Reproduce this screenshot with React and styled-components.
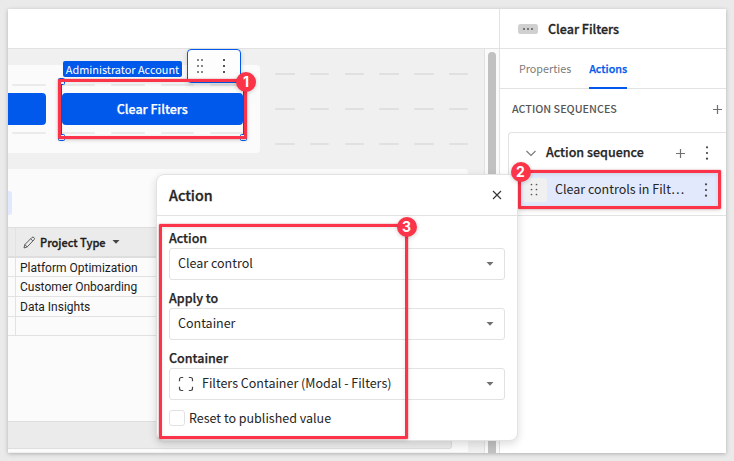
import React from "react";
import styled, { createGlobalStyle } from "styled-components";

const BLUE = "#0059eb";
const RED = "#fb3449";
const LINE = "#e2e2e2";

const GlobalStyle = createGlobalStyle`
  *, *::before, *::after { box-sizing: border-box; }
  html, body { margin: 0; height: 100%; background: #eaeaea; overflow: hidden; }
  body { font-family: "Noto Sans CJK JP", "Noto Sans", sans-serif; font-size: 12.5px; color: #252525; line-height: 18px; }
  button { font: inherit; color: inherit; border: 0; padding: 0; background: none; }
  svg { display: block; flex: none; }
`;

const Page = styled.main`
  position: relative;
  width: 734px;
  height: 461px;
  padding: 9px 8px 8px;
`;

const Shell = styled.div`
  display: grid;
  grid-template-columns: 491px 227px;
  height: 444px;
  background: #fff;
  overflow: hidden;
  box-shadow: 0 1px 4px rgba(0, 0, 0, 0.25);
`;

const Editor = styled.section`
  display: flex;
  flex-direction: column;
  min-width: 0;
  min-height: 0;
`;

const TopBar = styled.header`
  height: 40px;
  flex: none;
  border-bottom: 1px solid ${LINE};
  background: #fff;
`;

const Workspace = styled.div`
  display: flex;
  flex: 1;
  min-height: 0;
`;

const Canvas = styled.div`
  width: 476px;
  background: #f0f0f0;
  padding-top: 16px;
  overflow: hidden;
`;

const ScrollTrack = styled.div`
  width: 15px;
  padding: 3px 0 0 3px;
  background: #fafafa;
  border-left: 1px solid ${LINE};
`;

const ScrollThumb = styled.div`
  width: 8px;
  height: 420px;
  border-radius: 4px;
  background: #c1c1c1;
`;

const CanvasTop = styled.div`
  display: flex;
  height: 88px;
`;

const ControlCard = styled.div`
  width: 252px;
  height: 88px;
  padding-top: 19px;
  background: #fbfbfb;
  border-radius: 0 4px 4px 0;
`;

const DashRow = styled.div`
  display: flex;
  gap: ${(p) => p.$gap}px;
  padding-left: ${(p) => p.$indent}px;
  height: 2px;
`;

const Dash = styled.span`
  width: ${(p) => p.$width}px;
  height: 2px;
  flex: none;
  border-radius: 1px;
  background: ${(p) => p.$color};
`;

const ButtonRow = styled.div`
  display: flex;
  gap: 15.5px;
  padding: 7px 0 7px;
`;

const CutButton = styled.div`
  width: 38px;
  height: 32px;
  background: ${BLUE};
  border-radius: 0 4px 4px 0;
`;

const PrimaryButton = styled.button`
  width: 181.5px;
  height: 32px;
  border-radius: 4px;
  background: ${BLUE};
  color: #fff;
  font-weight: 500;
  font-size: 12.5px;
  line-height: 18px;
  -webkit-text-stroke: 0.25px currentColor;
`;

const GridHints = styled.div`
  display: flex;
  flex-direction: column;
  gap: 33px;
  padding-top: 8px;
`;

const TableCard = styled.div`
  width: 460px;
  height: 283px;
  margin-top: 16px;
  padding-top: 22px;
  background: #fbfbfb;
  border-top-right-radius: 4px;
`;

const Chip = styled.div`
  width: 4px;
  height: 24px;
  margin-bottom: 12px;
  border-radius: 0 3px 3px 0;
  background: #e3e9fc;
`;

const Table = styled.div`
  width: 444px;
`;

const TableRow = styled.div`
  display: grid;
  grid-template-columns: 7px 1fr;
  grid-template-rows: 100%;
  height: ${(p) => p.$height || 20}px;
  border-bottom: 1px solid ${LINE};
  font: 12px/21px Roboto, sans-serif;
  color: #1b1b1b;
`;

const HeadRow = styled(TableRow)`
  height: 31px;
  background: #ebebeb;
  border-top: 1px solid #dedede;
  border-bottom: 2px solid #dedede;
`;

const Cell = styled.div`
  padding-left: 4px;
  border-left: 1px solid ${(p) => (p.$first ? "transparent" : LINE)};
`;

const HeadCell = styled.div`
  display: flex;
  align-items: center;
  padding-left: 7px;
  border-left: 1px solid ${LINE};
  font: 500 11px/18px "Noto Sans CJK JP", sans-serif;
  -webkit-text-stroke: 0.3px currentColor;
`;

const HeadLabel = styled.span`
  width: 64px;
  margin: 0 8px 0 4px;
  white-space: nowrap;
`;

const TableFooter = styled.div`
  width: 444px;
  height: 28px;
  margin-top: 85px;
  background: #ebebeb;
  border: solid #dedede;
  border-width: 1px 1px 1px 0;
  border-bottom-right-radius: 3px;
`;

const Panel = styled.aside`
  border-left: 1px solid ${LINE};
  background: #fff;
`;

const PanelHeader = styled.header`
  display: flex;
  align-items: center;
  gap: 10px;
  height: 40px;
  padding-left: 18px;
  border-bottom: 1px solid ${LINE};
`;

const TypeBadge = styled.span`
  display: flex;
  align-items: center;
  justify-content: center;
  width: 20px;
  height: 10px;
  border-radius: 2.5px;
  background: #d0d0d0;
`;

const PanelTitle = styled.h1`
  margin: 0;
  font-size: 12.5px;
  font-weight: 500;
  line-height: 20px;
  -webkit-text-stroke: 0.3px currentColor;
`;

const Tabs = styled.nav`
  display: flex;
  gap: 18px;
  height: 40px;
  padding-left: 19px;
  border-bottom: 1px solid ${LINE};
`;

const Tab = styled.button`
  display: flex;
  align-items: center;
  height: 40px;
  padding-top: 2px;
  font-size: 10.75px;
  font-weight: ${(p) => (p.$active ? 500 : 400)};
  color: ${(p) => (p.$active ? BLUE : "#7a7a7a")};
  border-bottom: 2px solid ${(p) => (p.$active ? BLUE : "transparent")};
  -webkit-text-stroke: ${(p) => (p.$active ? "0.25px currentColor" : "0")};
`;

const SectionHead = styled.div`
  display: flex;
  align-items: center;
  justify-content: space-between;
  height: 41px;
  padding: 0 4px 0 12px;
  margin-bottom: 2px;
  color: #555;
  font-size: 10.75px;
  font-weight: 500;
`;

const SectionTitle = styled.span`
  padding-bottom: 2px;
`;

const SequenceCard = styled.div`
  height: 84px;
  margin-left: 8px;
  border: solid ${LINE};
  border-width: 1px 0 1px 1px;
  border-radius: 4px 0 0 0;
`;

const SequenceHead = styled.div`
  display: grid;
  grid-template-columns: 11px 1fr 9px 24px;
  align-items: center;
  height: 40px;
  padding: 0 17px 0 17px;
`;

const SequenceName = styled.span`
  padding: 0 0 2px 9px;
  font-weight: 500;
  -webkit-text-stroke: 0.25px currentColor;
`;

const MenuSlot = styled.span`
  justify-self: end;
`;

const StepRow = styled.div`
  display: grid;
  grid-template-columns: 24px 1fr 4px;
  align-items: center;
  height: 33px;
  margin: 0 8px 0 12px;
  padding: 0 10px 0 2px;
  background: #e3e9fc;
`;

const StepHandle = styled.span`
  display: flex;
  align-items: center;
  justify-content: center;
  height: 24px;
  padding-right: 2px;
  border-radius: 3px;
  background: #f0f0f1;
`;

const StepName = styled.span`
  padding: 0 0 2px 8px;
  white-space: nowrap;
`;

const SelectionLabel = styled.div`
  position: absolute;
  left: 63px;
  top: 61px;
  width: 119px;
  height: 16px;
  border-radius: 2px;
  background: ${BLUE};
  color: #fff;
  font-size: 10.9px;
  line-height: 16px;
  text-align: center;
  white-space: nowrap;
`;

const SelectionToolbar = styled.div`
  position: absolute;
  left: 187px;
  top: 49px;
  width: 54px;
  height: 34px;
  display: flex;
  align-items: center;
  padding-left: 9px;
  gap: 20px;
  background: #fdfdfd;
  border: 1px solid ${BLUE};
  border-radius: 4px;
  box-shadow: 0 2px 5px rgba(0, 0, 0, 0.16);
`;

const SelectionFrame = styled.div`
  position: absolute;
  left: 61px;
  top: 80px;
  width: 183px;
  height: 58px;
  border: 1px solid ${BLUE};
`;

const Handle = styled.i`
  position: absolute;
  width: 7px;
  height: 7px;
  border: 1px solid ${BLUE};
  border-radius: 1.5px;
  background: #fff;
  ${(p) => (p.$v === "top" ? "top: -3px" : "bottom: -4px")};
  ${(p) => (p.$h === "left" ? "left: -4px" : "right: -4px")};
`;

const Dialog = styled.section`
  position: absolute;
  left: 156px;
  top: 174px;
  width: 362px;
  height: 267px;
  background: #fff;
  border: 1px solid ${LINE};
  border-radius: 8px;
  box-shadow: 0 3px 9px rgba(0, 0, 0, 0.14);
`;

const DialogHeader = styled.header`
  display: flex;
  align-items: center;
  justify-content: space-between;
  height: 41px;
  padding: 0 15px 0 12px;
  border-bottom: 1px solid ${LINE};
`;

const DialogTitle = styled.h2`
  margin: 0;
  font-size: 14.3px;
  font-weight: 500;
  -webkit-text-stroke: 0.3px currentColor;
`;

const DialogBody = styled.div`
  padding: 14px 12px 0;
`;

const Field = styled.div`
  margin-bottom: 10px;
`;

const FieldLabel = styled.div`
  height: 18px;
  line-height: 16px;
  font-weight: 500;
  -webkit-text-stroke: 0.25px currentColor;
`;

const Select = styled.div`
  display: flex;
  align-items: center;
  gap: 8px;
  height: 32px;
  padding: 0 10px 0 8px;
  border: 1px solid ${LINE};
  border-radius: 3px;
`;

const SelectValue = styled.span`
  flex: 1;
  padding-bottom: 2px;
`;

const CheckRow = styled.label`
  display: flex;
  align-items: center;
  gap: 4px;
  height: 16px;
`;

const CheckBox = styled.span`
  width: 16px;
  height: 16px;
  border: 1px solid ${LINE};
  border-radius: 3px;
`;

const Callout = styled.div`
  position: absolute;
  left: ${(p) => p.$x}px;
  top: ${(p) => p.$y}px;
  width: ${(p) => p.$w}px;
  height: ${(p) => p.$h}px;
  border: 3px solid ${RED};
  border-radius: 1px;
  box-shadow: 0 0 0 0.5px rgba(251, 52, 73, 0.25), 0 1px 4px rgba(0, 0, 0, 0.18), inset 0 1px 4px rgba(0, 0, 0, 0.1);
`;

const CalloutNumber = styled.span`
  position: absolute;
  left: ${(p) => p.$x}px;
  top: ${(p) => p.$y}px;
  width: 20px;
  height: 20px;
  border-radius: 50%;
  background: ${RED};
  box-shadow: 0 1px 4px rgba(0, 0, 0, 0.2);
  color: #fff;
  font: 700 14px/19px Inter, sans-serif;
  text-align: center;
`;

const Dots = ({ cols = 1, gapX = 4, gapY = 6, size = 2, color = "#555" }) => {
  const w = (cols - 1) * gapX + size;
  const h = 2 * gapY + size;
  return (
    <svg width={w} height={h} fill={color} shapeRendering="crispEdges">
      {[0, 1, 2].map((r) =>
        Array.from({ length: cols }, (_, c) => (
          <rect key={`${r}-${c}`} x={c * gapX} y={r * gapY} width={size} height={size} />
        ))
      )}
    </svg>
  );
};

const HandleDots = () => (
  <svg width="8" height="13" viewBox="0 0 8 13" fill="#555">
    {[1.5, 6.5, 11.5].flatMap((y) =>
      [1.5, 6.5].map((x) => <circle key={`${x}-${y}`} cx={x} cy={y} r="0.85" />)
    )}
  </svg>
);

const Kebab = () => (
  <svg width="4" height="16" viewBox="0 0 4 16" fill="#444">
    <circle cx="2" cy="2.3" r="1.1" />
    <circle cx="2" cy="8" r="1.1" />
    <circle cx="2" cy="13.7" r="1.1" />
  </svg>
);

const Plus = () => (
  <svg width="9" height="9" viewBox="0 0 9 9" stroke="#707070" strokeWidth="1.2">
    <path d="M4.5 0v9M0 4.5h9" />
  </svg>
);

const Caret = ({ color = "#707070" }) => (
  <svg width="8" height="4" viewBox="0 0 8 4" fill={color}>
    <path d="M.5 0h7L4 3.8z" />
  </svg>
);

const Chevron = () => (
  <svg width="10" height="8" viewBox="0 0 10 8" fill="none" stroke="#777" strokeWidth="1.1">
    <path d="M.5 2L5 6.5 9.5 2" />
  </svg>
);

const Close = () => (
  <svg width="10" height="10" viewBox="0 0 10 10" stroke="#333" strokeWidth="1.1">
    <path d="M1 1l8 8M9 1L1 9" />
  </svg>
);

const Pencil = () => (
  <svg width="13" height="13" viewBox="0 0 13 13" fill="none" stroke="#555" strokeWidth="0.95" strokeLinejoin="round">
    <path d="M1 12l.8-3.4L8.9 1.5q1.1-.9 2.1.1t.1 2.1L4.2 10.9zM7.7 2.8l2.2 2.2M1.8 8.6l2.4 2.3" />
  </svg>
);

const ContainerIcon = () => (
  <svg width="16" height="16" viewBox="0 0 16 16" fill="none" stroke="#444" strokeWidth="1.2">
    <path d="M5.2 1.5H3.4Q1.5 1.5 1.5 3.4V5.2M10.8 1.5h1.8q1.9 0 1.9 1.9V5.2M5.2 14.5H3.4q-1.9 0-1.9-1.9V10.8M10.8 14.5h1.8q1.9 0 1.9-1.9V10.8" />
  </svg>
);

const Ellipsis = () => (
  <svg width="10" height="2" fill="#777" shapeRendering="crispEdges">
    <rect width="2" height="2" />
    <rect x="4" width="2" height="2" />
    <rect x="8" width="2" height="2" />
  </svg>
);

const Dashes = ({ count, width, gap, indent, color }) => (
  <DashRow $gap={gap} $indent={indent}>
    {Array.from({ length: count }, (_, i) => (
      <Dash key={i} $width={width} $color={color} />
    ))}
  </DashRow>
);

const CardDashes = () => <Dashes count={5} width={33.5} gap={16} indent={4} color="#ebebeb" />;

const rows = ["Platform Optimization", "Customer Onboarding", "Data Insights", ""];

const fields = [
  { label: "Action", value: "Clear control" },
  { label: "Apply to", value: "Container" },
  { label: "Container", value: "Filters Container (Modal - Filters)", icon: true },
];

export default function App() {
  return (
    <Page>
      <GlobalStyle />
      <Shell>
        <Editor>
          <TopBar />
          <Workspace>
            <Canvas>
              <CanvasTop>
                <ControlCard>
                  <CardDashes />
                  <ButtonRow>
                    <CutButton />
                    <PrimaryButton>Clear Filters</PrimaryButton>
                  </ButtonRow>
                  <CardDashes />
                </ControlCard>
                <GridHints>
                  {[0, 1, 2].map((i) => (
                    <Dashes key={i} count={6} width={19.5} gap={15.3} indent={15} color="#e0e0e0" />
                  ))}
                </GridHints>
              </CanvasTop>
              <TableCard>
                <Chip />
                <Table>
                  <HeadRow>
                    <span />
                    <HeadCell>
                      <Pencil />
                      <HeadLabel>Project Type</HeadLabel>
                      <Caret color="#444" />
                    </HeadCell>
                  </HeadRow>
                  {rows.map((name, i) => (
                    <TableRow key={i} $height={i === 0 || i === 3 ? 19 : 20}>
                      <Cell $first />
                      <Cell>{name}</Cell>
                    </TableRow>
                  ))}
                </Table>
                <TableFooter />
              </TableCard>
            </Canvas>
            <ScrollTrack>
              <ScrollThumb />
            </ScrollTrack>
          </Workspace>
        </Editor>

        <Panel>
          <PanelHeader>
            <TypeBadge>
              <Ellipsis />
            </TypeBadge>
            <PanelTitle>Clear Filters</PanelTitle>
          </PanelHeader>
          <Tabs>
            <Tab>Properties</Tab>
            <Tab $active>Actions</Tab>
          </Tabs>
          <SectionHead>
            <SectionTitle>ACTION SEQUENCES</SectionTitle>
            <Plus />
          </SectionHead>
          <SequenceCard>
            <SequenceHead>
              <Chevron />
              <SequenceName>Action sequence</SequenceName>
              <Plus />
              <MenuSlot>
                <Kebab />
              </MenuSlot>
            </SequenceHead>
            <StepRow>
              <StepHandle>
                <HandleDots />
              </StepHandle>
              <StepName>Clear controls in Filt…</StepName>
              <Kebab />
            </StepRow>
          </SequenceCard>
        </Panel>
      </Shell>

      <SelectionFrame>
        <Handle $v="top" $h="left" />
        <Handle $v="bottom" $h="left" />
        <Handle $v="bottom" $h="right" />
      </SelectionFrame>
      <SelectionLabel>Administrator Account</SelectionLabel>
      <SelectionToolbar>
        <Dots cols={2} color="#888" />
        <Dots />
      </SelectionToolbar>

      <Callout $x={58} $y={79} $w={189} $h={60} />
      <CalloutNumber $x={236} $y={72}>1</CalloutNumber>
      <Callout $x={518} $y={170} $w={203} $h={39} />

      <Dialog>
        <DialogHeader>
          <DialogTitle>Action</DialogTitle>
          <Close />
        </DialogHeader>
        <DialogBody>
          {fields.map((f) => (
            <Field key={f.label}>
              <FieldLabel>{f.label}</FieldLabel>
              <Select>
                {f.icon && <ContainerIcon />}
                <SelectValue>{f.value}</SelectValue>
                <Caret />
              </Select>
            </Field>
          ))}
          <CheckRow>
            <CheckBox />
            Reset to published value
          </CheckRow>
        </DialogBody>
      </Dialog>
      <CalloutNumber $x={510.5} $y={161.5}>2</CalloutNumber>
      <Callout $x={159} $y={224} $w={248.5} $h={215} />
      <CalloutNumber $x={396.5} $y={216.5}>3</CalloutNumber>
    </Page>
  );
}
